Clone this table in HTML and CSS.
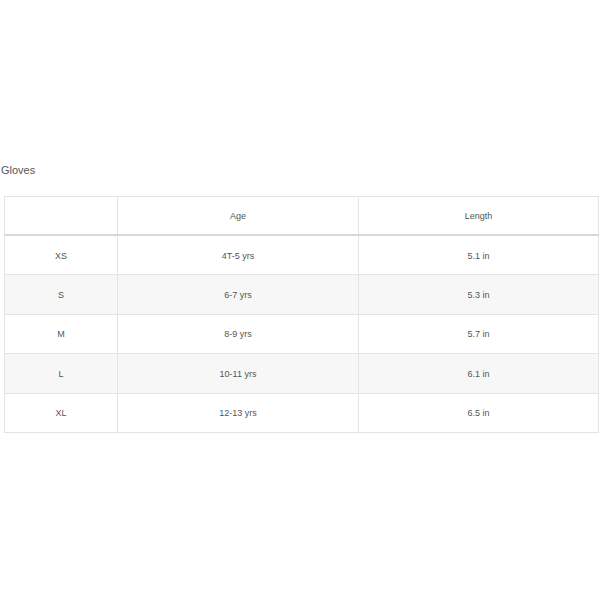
FILE: index.html
```html
<!DOCTYPE html>
<html>
<head>
<meta charset="utf-8">
<link rel="stylesheet" href="styles.css">
</head>
<body>
<div class="page">
  <h2 class="title">Gloves</h2>
  <table class="size-table">
    <colgroup>
      <col class="c1"><col class="c2"><col class="c3">
    </colgroup>
    <thead>
      <tr><th></th><th>Age</th><th>Length</th></tr>
    </thead>
    <tbody>
      <tr><td>XS</td><td>4T-5 yrs</td><td>5.1 in</td></tr>
      <tr><td>S</td><td>6-7 yrs</td><td>5.3 in</td></tr>
      <tr><td>M</td><td>8-9 yrs</td><td>5.7 in</td></tr>
      <tr><td>L</td><td>10-11 yrs</td><td>6.1 in</td></tr>
      <tr><td>XL</td><td>12-13 yrs</td><td>6.5 in</td></tr>
    </tbody>
  </table>
</div>
</body>
</html>
```
FILE: styles.css
```css
html, body {
  margin: 0;
  padding: 0;
  background: #fff;
}
.page {
  padding-top: 162px;
  font-family: "Liberation Sans", Arial, Helvetica, sans-serif;
  color: #555;
}
.title {
  margin: 0 0 18px 1px;
  font-size: 11px;
  font-weight: normal;
  line-height: 16px;
  color: #555;
}
.size-table {
  margin-left: 4px;
  width: 594px;
  border-collapse: collapse;
  table-layout: fixed;
  border: 1px solid #e4e4e4;
}
.c1 { width: 113px; }
.c2 { width: 241px; }
.c3 { width: 240px; }
.size-table th,
.size-table td {
  border: 1px solid #e4e4e4;
  text-align: center;
  font-size: 9px;
  font-weight: normal;
  color: #555;
  padding: 1px 0 0;
}
.size-table thead th {
  height: 36px;
  border-bottom: 2px solid #d8d8d8;
}
.size-table td {
  height: 37.4px;
}
.size-table tbody tr:nth-child(even) td {
  background: #f7f7f7;
}
```
